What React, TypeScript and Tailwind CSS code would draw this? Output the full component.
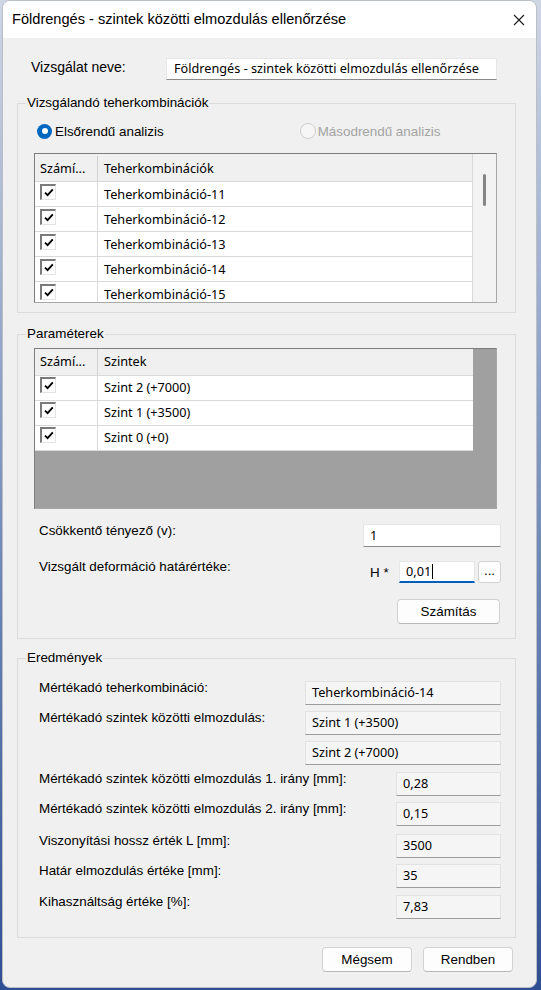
import React from "react";

const lbl = "font-['Liberation_Sans',Arial,sans-serif] text-[13.4px] leading-[15px] text-black";
const val = "font-['Noto_Sans',sans-serif] text-[12.7px] text-black";

const kombinaciok = [
  "Teherkombináció-11",
  "Teherkombináció-12",
  "Teherkombináció-13",
  "Teherkombináció-14",
  "Teherkombináció-15",
];

const szintek = ["Szint 2 (+7000)", "Szint 1 (+3500)", "Szint 0 (+0)"];

function Pipa() {
  return (
    <span className="flex h-[16px] w-[16px] items-center justify-center border-l-2 border-t-2 border-r border-b border-l-[#7a7a7a] border-t-[#7a7a7a] border-r-[#e3e3e3] border-b-[#e3e3e3] bg-white">
      <svg width="10" height="9" viewBox="0 0 10 9">
        <path d="M1 4.6 L3.6 7.2 L8.8 1.4" stroke="#000" strokeWidth="1.9" fill="none" />
      </svg>
    </span>
  );
}

function Sor({ nev, lejjebb }: { nev: string; lejjebb?: boolean }) {
  return (
    <div className="flex h-[25px] shrink-0 border-b border-[#d9d9d9] bg-white">
      <div className={`w-[63px] border-r border-[#d9d9d9] pl-[5px] ${lejjebb ? "pt-[2px]" : "pt-[1px]"}`}>
        <Pipa />
      </div>
      <div className={`${val} flex flex-1 items-center pl-[6px] ${lejjebb ? "pt-[2px]" : ""}`}>{nev}</div>
    </div>
  );
}

function Fejlec({ cim, magas }: { cim: string; magas?: boolean }) {
  return (
    <div className={`${val} flex shrink-0 border-b border-[#d9d9d9] bg-[#f0f0f0] ${magas ? "h-[28px] pt-[2px]" : "h-[27px]"}`}>
      <div className="flex w-[63px] items-center border-r border-[#d0d0d0] pl-[5px]">Számí...</div>
      <div className="flex flex-1 items-center pl-[6px]">{cim}</div>
    </div>
  );
}

function Csoport({ cim, children, className }: { cim: string; children: React.ReactNode; className?: string }) {
  return (
    <fieldset className={`ml-[14px] w-[499px] border border-[#dcdcdc] ${className ?? ""}`}>
      <legend className={`${lbl} ml-[8px] px-[1px] leading-[16px]`}>{cim}</legend>
      {children}
    </fieldset>
  );
}

function Mezo({ children, w }: { children: React.ReactNode; w: string }) {
  return (
    <div className={`${val} flex h-[24px] shrink-0 items-center border border-[#e2e2e2] border-b-[#9c9c9c] bg-[#f5f5f5] pl-[6px] ${w}`}>
      {children}
    </div>
  );
}

function Eredmeny({ cimke, ertek, w, lw, mt }: { cimke: string; ertek: string; w: string; lw: string; mt: string }) {
  return (
    <div className={`flex items-start ${mt}`}>
      <span className={`${lbl} ml-[21px] -mt-[1px] ${lw}`}>{cimke}</span>
      <Mezo w={w}>{ertek}</Mezo>
    </div>
  );
}

function Gomb({ children, w }: { children: React.ReactNode; w: string }) {
  return (
    <button className={`${lbl} flex h-[25px] items-center justify-center rounded-[4px] border border-[#d2d2d2] border-b-[#b8b8b8] bg-[#fdfdfd] ${w}`}>
      {children}
    </button>
  );
}

export default function App() {
  return (
    <div className="h-[990px] w-[541px] bg-linear-to-b from-[#cfd6e4] to-[#2f4f93]">
      <div className="ml-[2px] flex h-[988px] w-[535px] flex-col overflow-hidden rounded-[8px] border border-[#b9bec7] bg-[#f0f0f0]">
        {/* címsor */}
        <div className="flex h-[37px] shrink-0 items-center justify-between bg-white pl-[9px] pr-[11px]">
          <span className="font-['Liberation_Sans',Arial,sans-serif] text-[14.6px] text-black">
            Földrengés - szintek közötti elmozdulás ellenőrzése
          </span>
          <svg width="12" height="12" viewBox="0 0 12 12">
            <path d="M1 1 L11 11 M11 1 L1 11" stroke="#1a1a1a" strokeWidth="1.1" />
          </svg>
        </div>

        <div className="mt-[20px] flex items-start">
          <span className={`${lbl} ml-[28px] w-[135px] pt-[2px] text-[14px]`}>Vizsgálat neve:</span>
          <div className={`${val} flex h-[22px] w-[331px] items-center border border-[#e6e6e6] border-b-[#8a8a8a] bg-white pl-[7px] text-[12.4px]`}>
            Földrengés - szintek közötti elmozdulás ellenőrzése
          </div>
        </div>

        <Csoport cim="Vizsgálandó teherkombinációk" className="mt-[15px] pb-[9px]">
          <div className={`${lbl} mt-[12px] flex h-[16px] items-center`}>
            <span className="ml-[19px] flex h-[15px] w-[15px] items-center justify-center rounded-full bg-[#0067c0]">
              <span className="h-[6px] w-[6px] rounded-full bg-white" />
            </span>
            <span className="ml-[3px]">Elsőrendű analizis</span>
            <span className="ml-[136px] h-[16px] w-[16px] rounded-full border border-[#cfcfcf] bg-[#f6f6f6]" />
            <span className="ml-[2px] text-[#a3a3a3]">Másodrendű analizis</span>
          </div>
          <div className="ml-[16px] mt-[14px] flex h-[150px] w-[463px] border border-[#a8a8a8] border-l-[#7e7e7e] border-t-[#7e7e7e] bg-[#f0f0f0]">
            <div className="flex w-[438px] flex-col overflow-hidden border-r border-[#d9d9d9]">
              <Fejlec cim="Teherkombinációk" magas />
              {kombinaciok.map((k) => (
                <Sor key={k} nev={k} lejjebb />
              ))}
            </div>
            <div className="flex flex-1 justify-center bg-[#f3f3f3] pt-[20px]">
              <span className="h-[32px] w-[3px] rounded-full bg-[#858585]" />
            </div>
          </div>
        </Csoport>

        <Csoport cim="Paraméterek" className="mt-[13px] pb-[14px]">
          <div className="ml-[16px] mt-[6px] flex h-[161px] w-[463px] border border-[#a8a8a8] border-l-[#7e7e7e] border-t-[#7e7e7e] bg-[#a0a0a0]">
            <div className="flex w-[438px] flex-col">
              <Fejlec cim="Szintek" />
              {szintek.map((s) => (
                <Sor key={s} nev={s} />
              ))}
            </div>
          </div>

          <div className="mt-[15px] flex items-start">
            <span className={`${lbl} ml-[21px] -mt-[1px] w-[324px]`}>Csökkentő tényező (v):</span>
            <div className={`${val} flex h-[23px] w-[138px] items-center border border-[#e6e6e6] border-b-[#8a8a8a] bg-white pl-[6px]`}>1</div>
          </div>

          <div className="mt-[14px] flex items-start">
            <span className={`${lbl} ml-[21px] -mt-[2px] w-[331px]`}>Vizsgált deformáció határértéke:</span>
            <span className={`${lbl} mt-[4px] w-[29px]`}>H *</span>
            <div className={`${val} flex h-[22px] w-[76px] items-center border border-[#e6e6e6] border-b-2 border-b-[#005fb8] bg-white pl-[6px]`}>
              0,01<span className="ml-[1px] h-[15px] w-[1px] bg-black" />
            </div>
            <button className={`${lbl} ml-[3px] flex h-[22px] w-[23px] items-center justify-center rounded-[3px] border border-[#d2d2d2] bg-[#fdfdfd] pb-[4px]`}>
              ...
            </button>
          </div>

          <div className="mt-[16px] flex justify-end pr-[15px]">
            <Gomb w="w-[103px]">Számítás</Gomb>
          </div>
        </Csoport>

        <Csoport cim="Eredmények" className="mt-[11px] pb-[18px]">
          <Eredmeny mt="mt-[15px]" cimke="Mértékadó teherkombináció:" ertek="Teherkombináció-14" lw="w-[266px]" w="w-[196px]" />
          <Eredmeny mt="mt-[6px]" cimke="Mértékadó szintek közötti elmozdulás:" ertek="Szint 1 (+3500)" lw="w-[266px]" w="w-[196px]" />
          <Eredmeny mt="mt-[6px]" cimke="" ertek="Szint 2 (+7000)" lw="w-[266px]" w="w-[196px]" />
          <Eredmeny mt="mt-[7px]" cimke="Mértékadó szintek közötti elmozdulás 1. irány [mm]:" ertek="0,28" lw="w-[357px]" w="w-[105px]" />
          <Eredmeny mt="mt-[6px]" cimke="Mértékadó szintek közötti elmozdulás 2. irány [mm]:" ertek="0,15" lw="w-[357px]" w="w-[105px]" />
          <Eredmeny mt="mt-[8px]" cimke="Viszonyítási hossz érték L [mm]:" ertek="3500" lw="w-[357px]" w="w-[105px]" />
          <Eredmeny mt="mt-[6px]" cimke="Határ elmozdulás értéke [mm]:" ertek="35" lw="w-[357px]" w="w-[105px]" />
          <Eredmeny mt="mt-[7px]" cimke="Kihasználtság értéke [%]:" ertek="7,83" lw="w-[357px]" w="w-[105px]" />
        </Csoport>

        <div className="mt-[9px] flex justify-end gap-[11px] pr-[23px]">
          <Gomb w="w-[90px]">Mégsem</Gomb>
          <Gomb w="w-[90px]">Rendben</Gomb>
        </div>
      </div>
    </div>
  );
}
